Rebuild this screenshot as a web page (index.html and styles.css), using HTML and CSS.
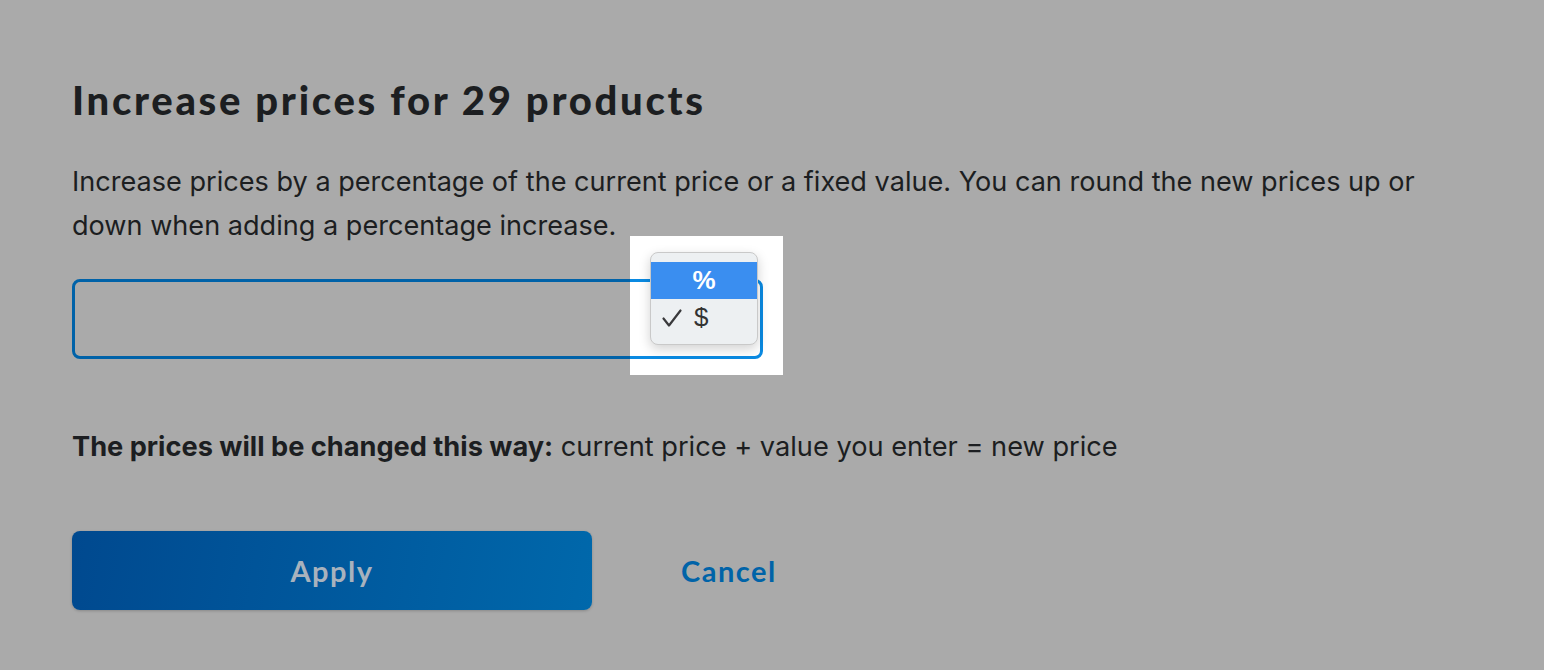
FILE: index.html
```html
<!DOCTYPE html>
<html>
<head>
<meta charset="utf-8">
<link rel="stylesheet" href="styles.css">
</head>
<body>
<main class="dialog">
  <h1 class="title">Increase prices for 29 products</h1>
  <p class="desc">Increase prices by a percentage of the current price or a fixed value. You can round the new prices up or down when adding a percentage increase.</p>
  <div class="field-row">
    <div class="input"></div>
    <div class="popup-window">
      <div class="input-echo"></div>
      <ul class="menu">
        <li class="menu-item selected">%</li>
        <li class="menu-item"><svg class="check" width="20" height="18" viewBox="0 0 20 18"><polyline points="1.5,9.5 7,16.5 18.5,1.5" fill="none" stroke="#3a3a3c" stroke-width="2.2" stroke-linecap="round" stroke-linejoin="round"/></svg>$</li>
      </ul>
    </div>
  </div>
  <p class="formula"><strong>The prices will be changed this way:</strong> current price + value you enter = new price</p>
  <div class="actions">
    <button class="btn-apply">Apply</button>
    <button class="btn-cancel">Cancel</button>
  </div>
</main>
</body>
</html>
```
FILE: styles.css
```css
html, body {
  margin: 0;
  padding: 0;
  background: #aaaaaa;
  height: 100%;
}
.dialog {
  padding: 75px 0 0 72px;
  font-family: "Inter", "Liberation Sans", sans-serif;
  color: #1c1e21;
}
.title {
  margin: 0;
  font-family: "Lato", sans-serif;
  font-weight: 900;
  font-size: 40px;
  line-height: 50px;
  letter-spacing: 2.7px;
}
.desc {
  margin: 35px 0 0;
  font-size: 27.1px;
  line-height: 44px;
  max-width: 1380px;
}
.field-row {
  position: relative;
  margin-top: 31px;
  width: 691px;
}
.input {
  box-sizing: border-box;
  height: 80px;
  border: 3.5px solid #0062a8;
  border-radius: 8px;
}
.popup-window {
  position: absolute;
  left: 558px;
  top: -43px;
  width: 153px;
  height: 139px;
  background: #ffffff;
  overflow: hidden;
}
.input-echo {
  position: absolute;
  left: -40px;
  top: 43px;
  width: 173px;
  height: 80px;
  box-sizing: border-box;
  border: 3.5px solid #0a8ae2;
  border-radius: 8px;
}
.menu {
  position: absolute;
  left: 20px;
  top: 16px;
  width: 108px;
  height: 93px;
  box-sizing: border-box;
  margin: 0;
  padding: 9px 0 0;
  list-style: none;
  background: #edf0f2;
  border: 1px solid #c9c9c9;
  border-radius: 8px;
  box-shadow: 0 4px 12px rgba(0,0,0,0.18);
  overflow: hidden;
  font-family: "Liberation Sans", sans-serif;
}
.menu-item {
  height: 37px;
  display: flex;
  align-items: center;
  padding-left: 43px;
  font-size: 26px;
  color: #333;
}
.menu-item.selected {
  background: #3a8ef0;
  color: #fff;
  font-weight: bold;
  justify-content: center;
  padding-left: 0;
}
.check {
  position: absolute;
  left: 11px;
  top: 56px;
}
.formula {
  margin: 70px 0 0;
  font-size: 27.2px;
  line-height: 36px;
}
.formula strong {
  font-weight: 700;
}
.actions {
  display: flex;
  align-items: center;
  margin-top: 66px;
}
.btn-apply {
  width: 520px;
  height: 79px;
  border: none;
  border-radius: 8px;
  background: linear-gradient(100deg, #00498f 0%, #0068ab 100%);
  box-shadow: 0 1px 3px rgba(0,0,0,0.2);
  color: #a8b2bd;
  font-family: "Lato", sans-serif;
  font-weight: 700;
  font-size: 29px;
  letter-spacing: 1.5px;
  cursor: pointer;
}
.btn-cancel {
  margin-left: 89px;
  border: none;
  background: none;
  padding: 0;
  color: #0063a8;
  font-family: "Lato", sans-serif;
  font-weight: 700;
  font-size: 29px;
  letter-spacing: 1.5px;
  cursor: pointer;
}
```
